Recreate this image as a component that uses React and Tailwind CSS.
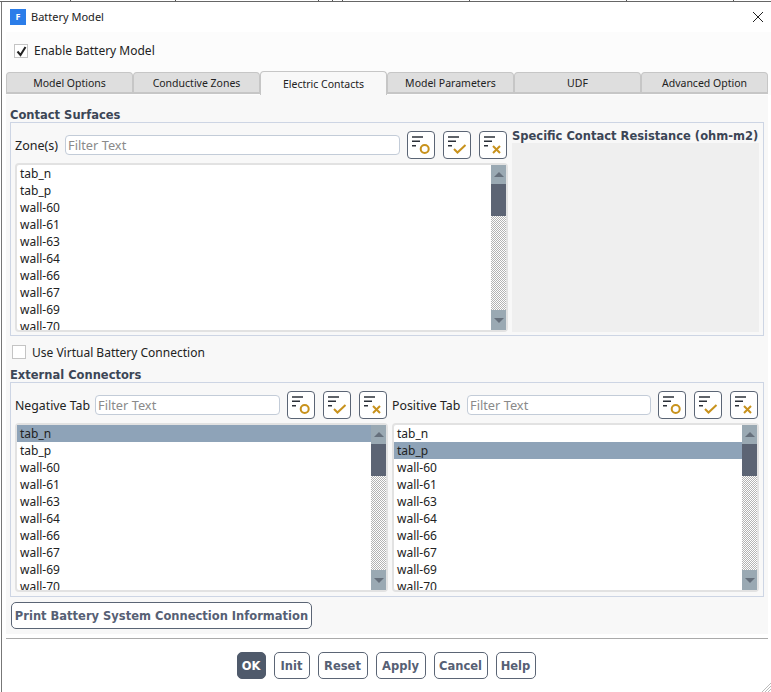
import React from "react";

const items = ["tab_n", "tab_p", "wall-60", "wall-61", "wall-63", "wall-64", "wall-66", "wall-67", "wall-69", "wall-70"];
const tabs = ["Model Options", "Conductive Zones", "Electric Contacts", "Model Parameters", "UDF", "Advanced Option"];
const actions = [
  { label: "OK", width: "w-[29px]" },
  { label: "Init", width: "w-9" },
  { label: "Reset", width: "w-[50px]" },
  { label: "Apply", width: "w-[50px]" },
  { label: "Cancel", width: "w-[54px]" },
  { label: "Help", width: "w-10" },
];

const FilterIcon = ({ type }) => (
  <svg width="22" height="22" viewBox="0 0 22 22" fill="none">
    <path d="M2 3h11M2 7.3h8M2 11.8h4" stroke="#2b3038" strokeWidth="1.6" />
    {type === "all" && <circle cx="14.7" cy="15" r="4" stroke="#c8921c" strokeWidth="2" />}
    {type === "check" && <path d="M8 15l3.5 3.5 8-7.5" stroke="#c8921c" strokeWidth="2" />}
    {type === "none" && <path d="M11 12l7 7M18 12l-7 7" stroke="#c8921c" strokeWidth="2" />}
  </svg>
);

const FilterButtons = () => (
  <div className="flex gap-2">
    {["all", "check", "none"].map((t) => (
      <div key={t} className="w-7 h-7 flex items-center justify-center rounded border border-[#5b6575] bg-white">
        <FilterIcon type={t} />
      </div>
    ))}
  </div>
);

const FilterInput = ({ width }) => (
  <div className={`${width} h-5 flex items-center px-[2px] pt-[2px] rounded border border-[#c3ccd8] bg-white text-[12.8px] text-[#8a8a8a]`}>
    Filter Text
  </div>
);

const ListBox = ({ selected, width }) => (
  <div className={`${width} h-[169px] flex border-2 border-[#e2e2e2] bg-white rounded-sm`}>
    <div className="flex-1 overflow-hidden">
      {items.map((item) => (
        <div
          key={item}
          className={`h-[17px] leading-[17px] pl-[3px] text-xs text-[#222] ${item === selected ? "bg-[#8ea3b8]" : ""}`}
        >
          {item}
        </div>
      ))}
    </div>
    <div className="w-[15px] flex flex-col">
      <div className="h-[19px] bg-[#9aa9b3] flex items-center justify-center">
        <div className="border-x-[5px] border-x-transparent border-b-[5px] border-b-[#66707c]" />
      </div>
      <div className="h-8 bg-[#5c6474]" />
      <div className="flex-1 bg-[repeating-conic-gradient(#b4b4b4_0_25%,#ffffff_0_50%)] bg-[length:2px_2px]" />
      <div className="h-5 bg-[#9aa9b3] flex items-center justify-center">
        <div className="border-x-[5px] border-x-transparent border-t-[5px] border-t-[#66707c]" />
      </div>
    </div>
  </div>
);

const ActionButton = ({ label, primary, width }) => (
  <div
    className={`${width} h-[27px] pt-[2px] flex items-center justify-center whitespace-nowrap rounded-[5px] border font-['DejaVu_Sans',sans-serif] font-bold text-[11.5px] ${
      primary ? "bg-[#4f5a6b] border-[#4f5a6b] text-white" : "bg-white border-[#5b6575] text-[#566074]"
    }`}
  >
    {label}
  </div>
);

const Heading = ({ children }) => (
  <div className="h-4 leading-[18px] font-['DejaVu_Sans',sans-serif] font-bold text-[11.5px] text-[#3c4656]">
    {children}
  </div>
);

export default function App() {
  return (
    <div className="font-['Noto_Sans','Liberation_Sans',sans-serif] relative w-[771px] h-[692px] overflow-hidden bg-white">
      {/* edge of the window behind */}
      <svg className="block" width="771" height="2" viewBox="0 0 771 2">
        <path d="M0 1.5h771" stroke="#666" />
        <path d="M70.5 0v1M175.5 0v1M318.5 0v1M332.5 0v1M342.5 0v1M469.5 0v1M626.5 0v1M733.5 0v1" stroke="#555" />
      </svg>
      <div className="h-[690px] ml-[1px] border-l border-[#777] pl-1 bg-white">
        {/* title bar */}
        <div className="h-[30px] flex items-center pl-1 pr-[7px]">
          <div className="w-4 h-4 bg-[#2b7de9] flex items-center justify-center text-[9px] font-bold text-white">F</div>
          <span className="ml-[5px] text-[11px] text-[#222]">Battery Model</span>
          <svg className="ml-auto" width="12" height="12" viewBox="0 0 12 12" fill="none">
            <path d="M1 1l10 10M11 1L1 11" stroke="#222" strokeWidth="1" />
          </svg>
        </div>

        <div className="h-[38px] flex items-center pl-2 bg-[#fcfcfc]">
          <div className="w-[14px] h-[14px] border border-[#c4c4c4] bg-white flex items-center justify-center">
            <svg width="11" height="11" viewBox="0 0 11 11" fill="none">
              <path d="M1.5 5.5l3 3.5 5-8" stroke="#222" strokeWidth="2" />
            </svg>
          </div>
          <span className="ml-[6px] mb-px text-xs text-[#222]">Enable Battery Model</span>
        </div>

        {/* tabs */}
        <div className="h-[25px] flex items-end bg-[#fcfcfc]">
          {tabs.map((tab, i) => (
            <div
              key={tab}
              className={`w-[127px] flex items-center justify-center text-[10.5px] text-[#222] rounded-t-sm border border-[#c6c6c6] ${
                i === 2 ? "h-6 pt-[2px] bg-[#f8f8f8] border-b-0" : "h-[22px] pt-[3px] bg-[#dedede] border-b-2 mb-px"
              }`}
            >
              {tab}
            </div>
          ))}
        </div>

        <div className="w-[762px] h-[539px] bg-[#f8f8f8] px-1 pt-[11px]">
          <Heading>Contact Surfaces</Heading>
          <div className="h-[214px] border border-[#cdd5e4] px-1 pt-2 flex gap-1">
            <div className="w-[493px]">
              <div className="h-7 flex items-center text-[12.5px] text-[#222]">
                <span className="w-[50px] pt-[2px]">Zone(s)</span>
                <FilterInput width="w-[335px]" />
                <div className="ml-[7px]"><FilterButtons /></div>
              </div>
              <div className="mt-1"><ListBox width="w-[493px]" /></div>
            </div>
            <div className="flex-1">
              <div className="h-3 leading-[11px] font-['DejaVu_Sans',sans-serif] font-bold text-[11.5px] text-[#3c4656] whitespace-nowrap">
                Specific Contact Resistance (ohm-m2)
              </div>
              <div className="w-[247px] h-[189px] bg-[#efefef]" />
            </div>
          </div>

          <div className="h-[30px] flex items-center pl-[2px] pt-[2px]">
            <div className="w-[14px] h-[14px] border border-[#c4c4c4] bg-white" />
            <span className="ml-[6px] pt-[2px] text-xs text-[#222]">Use Virtual Battery Connection</span>
          </div>

          <Heading>External Connectors</Heading>
          <div className="h-[215px] border border-[#cdd5e4] px-1 pt-2">
            <div className="h-7 flex items-center text-[12.3px] text-[#222]">
              <span className="w-[80px] pt-[2px] whitespace-nowrap">Negative Tab</span>
              <FilterInput width="w-[185px]" />
              <div className="ml-[7px]"><FilterButtons /></div>
              <span className="ml-[5px] w-[75px] pt-[2px] whitespace-nowrap">Positive Tab</span>
              <FilterInput width="w-[184px]" />
              <div className="ml-[7px]"><FilterButtons /></div>
            </div>
            <div className="mt-1 flex gap-[4px]">
              <ListBox width="w-[373px]" selected="tab_n" />
              <ListBox width="w-[367px]" selected="tab_p" />
            </div>
          </div>

          <div className="mt-[5px] flex">
            <div className="ml-px"><ActionButton label="Print Battery System Connection Information" width="w-[301px]" /></div>
          </div>
        </div>

        <div className="w-[762px] mt-[4px] border-t border-[#aaaaaa]" />

        <div className="w-[762px] mt-[13px] pr-[2px] flex justify-center gap-2">
          {actions.map((b) => (
            <ActionButton key={b.label} label={b.label} width={b.width} primary={b.label === "OK"} />
          ))}
        </div>
      </div>
      {/* resize grip */}
      <svg className="absolute right-0 bottom-0" width="10" height="10" viewBox="0 0 10 10" fill="none">
        <path d="M10 1L1 10M10 4L4 10M10 7L7 10" stroke="#bbb" />
      </svg>
    </div>
  );
}
